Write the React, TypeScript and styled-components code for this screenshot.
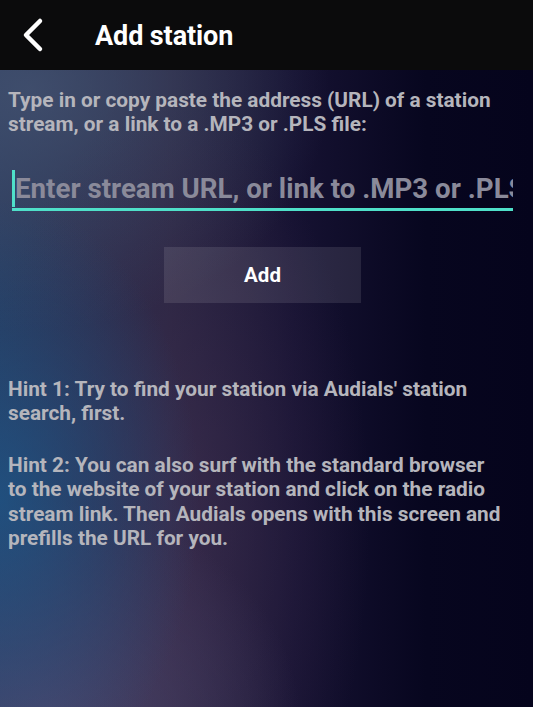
import React from "react";
import { styled, createGlobalStyle } from "styled-components";

const GlobalStyle = createGlobalStyle`
  html, body {
    margin: 0;
    padding: 0;
    background: #06051f;
  }
  * {
    box-sizing: border-box;
  }
`;

const Screen = styled.div`
  width: 533px;
  height: 707px;
  display: flex;
  flex-direction: column;
  font-family: Roboto, "Noto Sans", sans-serif;
  overflow: hidden;
  background:
    radial-gradient(ellipse 200px 300px at 0px 500px, rgba(30, 85, 135, 0.8), rgba(30, 85, 135, 0) 100%),
    radial-gradient(ellipse 260px 220px at 40px 720px, rgba(80, 72, 110, 0.85), rgba(80, 72, 110, 0) 100%),
    radial-gradient(ellipse 200px 420px at 170px 520px, rgba(70, 50, 85, 0.55), rgba(70, 50, 85, 0) 100%),
    radial-gradient(ellipse 300px 240px at 30px 90px, rgba(70, 85, 115, 0.75), rgba(70, 85, 115, 0) 100%),
    linear-gradient(90deg, #29385a 0%, #282440 32%, #161232 55%, #07061f 80%, #05041c 100%);
`;

const TopBar = styled.header`
  height: 70px;
  flex: none;
  display: flex;
  align-items: center;
  background: #0b0b0c;
  padding-left: 19px;
`;

const BackButton = styled.button`
  width: 28px;
  height: 40px;
  padding: 0;
  border: none;
  background: none;
  display: flex;
  align-items: center;
  justify-content: center;
  cursor: pointer;
`;

const Title = styled.h1`
  margin: 2px 0 0 48px;
  color: #ffffff;
  font-size: 27px;
  font-weight: 700;
  letter-spacing: -0.1px;
`;

const Body = styled.main`
  display: flex;
  flex-direction: column;
  padding: 18px 20px 0 8px;
`;

const Text = styled.p<{ $gap?: number }>`
  margin: 0 9px ${(p) => p.$gap ?? 0}px 0;
  color: #b5b5bc;
  font-size: 20.8px;
  font-weight: 700;
  line-height: 24.3px;
`;

const Field = styled.div`
  margin: 32px 0 0 4px;
  border-bottom: 3px solid #4fe0c9;
  display: flex;
  align-items: center;
  height: 42px;
  overflow: hidden;
`;

const Cursor = styled.span`
  width: 3px;
  height: 37px;
  background: #4fe0c9;
  flex: none;
`;

const Input = styled.input`
  flex: 1;
  min-width: 0;
  border: none;
  background: transparent;
  outline: none;
  padding: 0;
  font-family: Roboto, "Noto Sans", sans-serif;
  font-size: 27.7px;
  font-weight: 700;
  color: #fff;
  &::placeholder {
    color: #8a8a9a;
  }
`;

const ButtonRow = styled.div`
  display: flex;
  justify-content: center;
  margin: 36px 0 74px 0;
  padding-left: 4px;
`;

const AddButton = styled.button`
  width: 197px;
  height: 56px;
  border: none;
  background: rgba(255, 255, 255, 0.1);
  color: #ffffff;
  font-family: Roboto, "Noto Sans", sans-serif;
  font-size: 20.5px;
  font-weight: 700;
  cursor: pointer;
`;

export default function App() {
  return (
    <>
      <GlobalStyle />
      <Screen>
        <TopBar>
          <BackButton aria-label="Back">
            <svg width="24" height="36" viewBox="0 0 24 36">
              <path d="M19 4 L5 18 L19 32" fill="none" stroke="#fff" strokeWidth="4.5" strokeLinecap="round" strokeLinejoin="round" />
            </svg>
          </BackButton>
          <Title>Add station</Title>
        </TopBar>
        <Body>
          <Text>
            Type in or copy paste the address (URL) of a station stream, or a link to a .MP3 or .PLS file:
          </Text>
          <Field>
            <Cursor />
            <Input placeholder="Enter stream URL, or link to .MP3 or .PLS file" />
          </Field>
          <ButtonRow>
            <AddButton>Add</AddButton>
          </ButtonRow>
          <Text $gap={28}>Hint 1: Try to find your station via Audials' station search, first.</Text>
          <Text>
            Hint 2: You can also surf with the standard browser to the website of your station and click on the radio
            stream link. Then Audials opens with this screen and prefills the URL for you.
          </Text>
        </Body>
      </Screen>
    </>
  );
}
